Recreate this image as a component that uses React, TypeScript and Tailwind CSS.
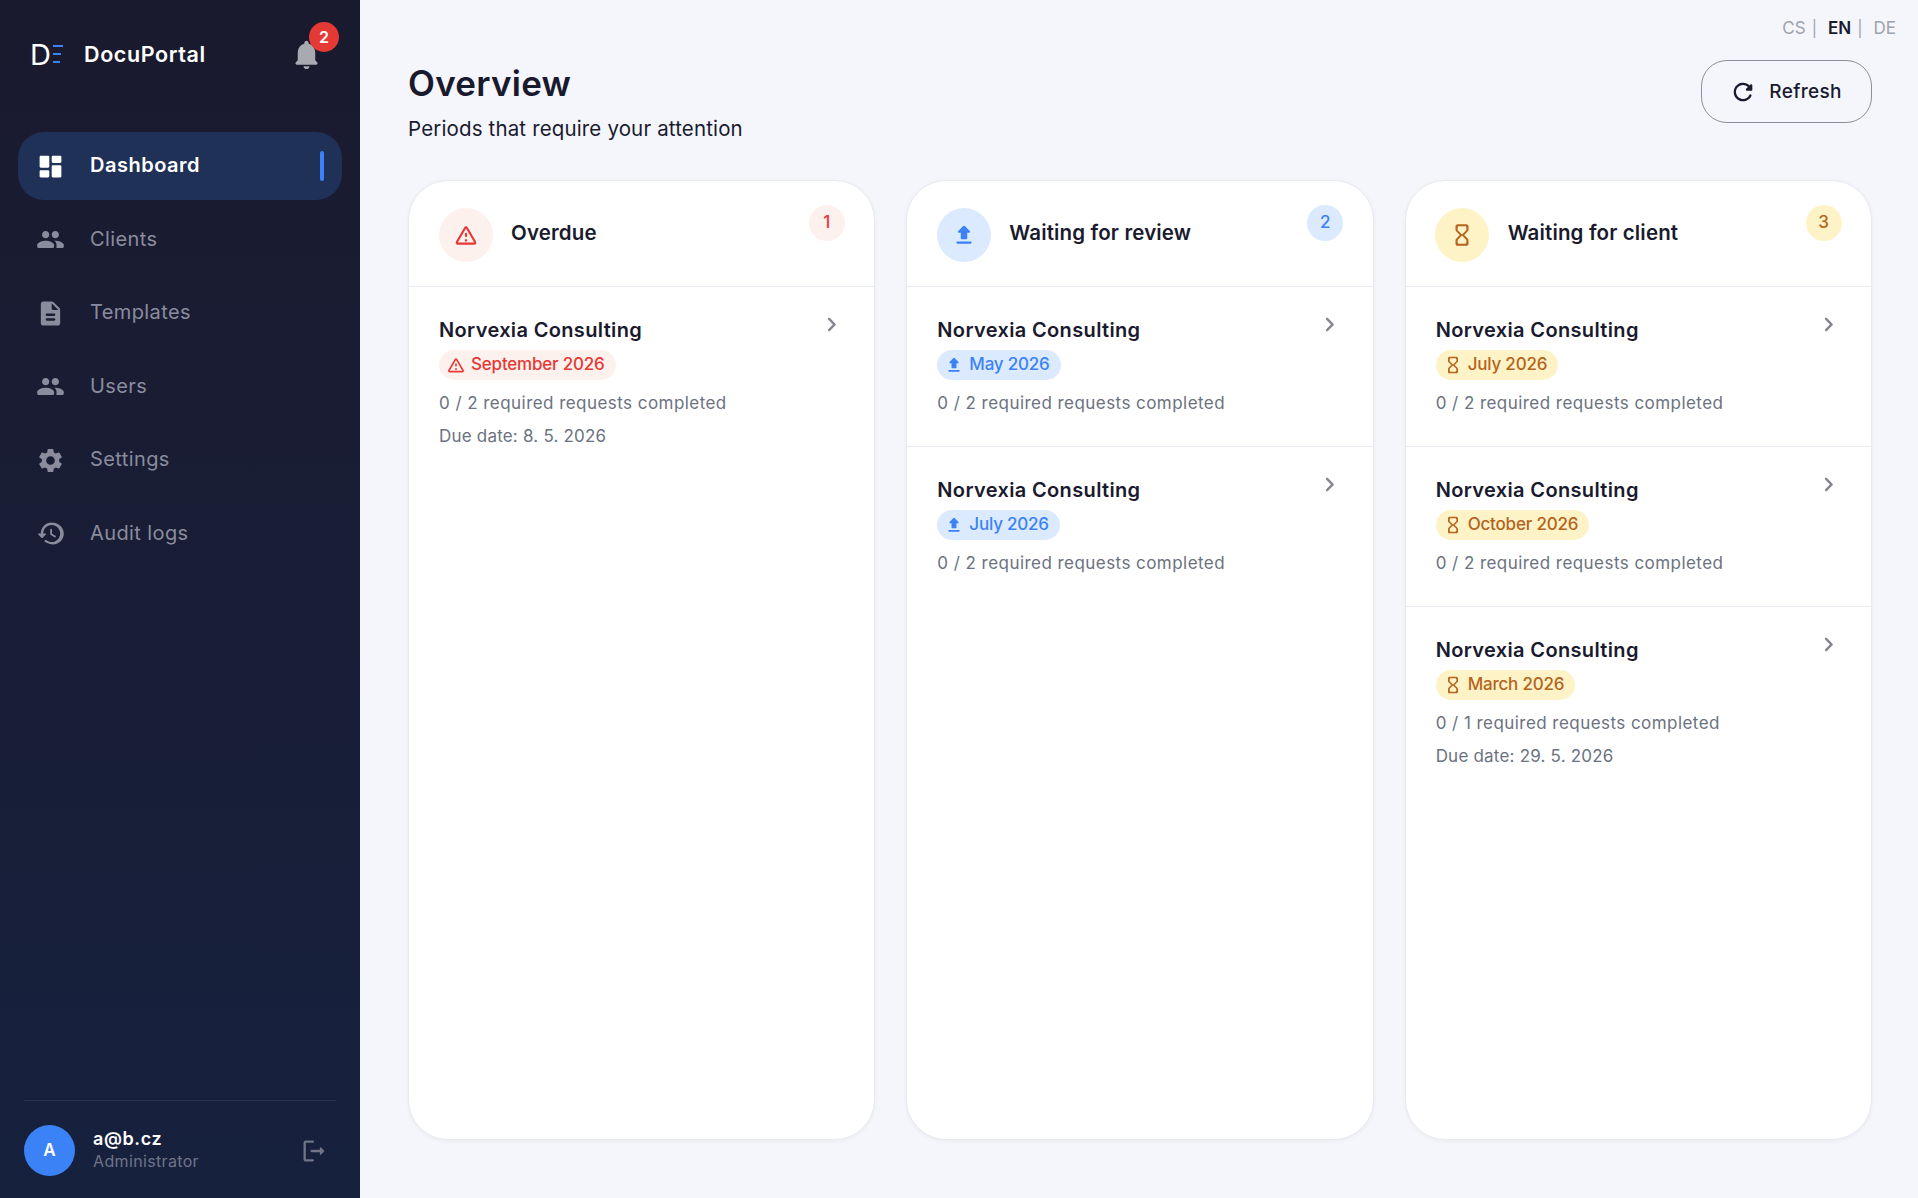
import type { ReactNode } from 'react';

const paths = {
  dashboard: 'M4 13h6c.55 0 1-.45 1-1V4c0-.55-.45-1-1-1H4c-.55 0-1 .45-1 1v8c0 .55.45 1 1 1zm0 8h6c.55 0 1-.45 1-1v-4c0-.55-.45-1-1-1H4c-.55 0-1 .45-1 1v4c0 .55.45 1 1 1zm10 0h6c.55 0 1-.45 1-1v-8c0-.55-.45-1-1-1h-6c-.55 0-1 .45-1 1v8c0 .55.45 1 1 1zM13 4v4c0 .55.45 1 1 1h6c.55 0 1-.45 1-1V4c0-.55-.45-1-1-1h-6c-.55 0-1 .45-1 1z',
  people: 'M16 11c1.66 0 2.99-1.34 2.99-3S17.66 5 16 5s-3 1.34-3 3 1.34 3 3 3zm-8 0c1.66 0 2.99-1.34 2.99-3S9.66 5 8 5 5 6.34 5 8s1.34 3 3 3zm0 2c-2.33 0-7 1.17-7 3.5V18c0 .55.45 1 1 1h12c.55 0 1-.45 1-1v-1.5c0-2.33-4.67-3.5-7-3.5zm8 0c-.29 0-.62.02-.97.05.02.01.03.03.04.04 1.14.83 1.93 1.94 1.93 3.41V18c0 .35-.07.69-.18 1H22c.55 0 1-.45 1-1v-1.5c0-2.33-4.67-3.5-7-3.5z',
  description: 'M14.59 2.59c-.38-.38-.89-.59-1.42-.59H6c-1.1 0-2 .9-2 2v16c0 1.1.89 2 1.99 2H18c1.1 0 2-.9 2-2V8.83c0-.53-.21-1.04-.59-1.41l-4.82-4.83zM15 18H9c-.55 0-1-.45-1-1s.45-1 1-1h6c.55 0 1 .45 1 1s-.45 1-1 1zm0-4H9c-.55 0-1-.45-1-1s.45-1 1-1h6c.55 0 1 .45 1 1s-.45 1-1 1zm-2-6V3.5L18.5 9H14c-.55 0-1-.45-1-1z',
  settings: 'M19.14 12.94c.04-.3.06-.61.06-.94 0-.32-.02-.64-.07-.94l2.03-1.58c.18-.14.23-.41.12-.61l-1.92-3.32c-.12-.22-.37-.29-.59-.22l-2.39.96c-.5-.38-1.03-.7-1.62-.94l-.36-2.54c-.04-.24-.24-.41-.48-.41h-3.84c-.24 0-.43.17-.47.41l-.36 2.54c-.59.24-1.13.57-1.62.94l-2.39-.96c-.22-.08-.47 0-.59.22L2.74 8.87c-.12.21-.08.47.12.61l2.03 1.58c-.05.3-.09.63-.09.94s.02.64.07.94l-2.03 1.58c-.18.14-.23.41-.12.61l1.92 3.32c.12.22.37.29.59.22l2.39-.96c.5.38 1.03.7 1.62.94l.36 2.54c.05.24.24.41.48.41h3.84c.24 0 .44-.17.47-.41l.36-2.54c.59-.24 1.13-.56 1.62-.94l2.39.96c.22.08.47 0 .59-.22l1.92-3.32c.12-.22.07-.47-.12-.61l-2.01-1.58zM12 15.6c-1.98 0-3.6-1.62-3.6-3.6s1.62-3.6 3.6-3.6 3.6 1.62 3.6 3.6-1.62 3.6-3.6 3.6z',
  history: 'M13.26 3C8.17 2.86 4 6.95 4 12H2.21c-.45 0-.67.54-.35.85l2.79 2.8c.2.2.51.2.71 0l2.79-2.8c.31-.31.09-.85-.36-.85H6c0-3.9 3.18-7.05 7.1-7 3.72.05 6.85 3.18 6.9 6.9.05 3.91-3.1 7.1-7 7.1-1.61 0-3.1-.55-4.28-1.48-.4-.31-.96-.28-1.32.08-.42.43-.39 1.13.08 1.5C9.99 20.28 11.91 21 14 21c5.05 0 9.14-4.17 9-9.26-.13-4.69-4.05-8.61-8.74-8.74zm-.76 5c-.41 0-.75.34-.75.75v3.68c0 .35.19.68.49.86l3.12 1.85c.36.21.82.09 1.03-.26.21-.36.09-.82-.26-1.03l-2.88-1.71v-3.4c0-.4-.34-.74-.75-.74z',
  bell: 'M12 22c1.1 0 2-.9 2-2h-4c0 1.1.9 2 2 2zm6-6v-5c0-3.07-1.63-5.64-4.5-6.32V4c0-.83-.67-1.5-1.5-1.5s-1.5.67-1.5 1.5v.68C7.64 5.36 6 7.92 6 11v5l-1.29 1.29c-.63.63-.19 1.71.7 1.71h13.17c.89 0 1.34-1.08.71-1.71L18 16z',
  logout: 'M5 5h6c.55 0 1-.45 1-1s-.45-1-1-1H5c-1.1 0-2 .9-2 2v14c0 1.1.9 2 2 2h6c.55 0 1-.45 1-1s-.45-1-1-1H5V5zM20.65 11.65l-2.79-2.79c-.32-.32-.86-.1-.86.35V11h-7c-.55 0-1 .45-1 1s.45 1 1 1h7v1.79c0 .45.54.67.85.35l2.79-2.79c.2-.19.2-.51.01-.7z',
  warning: 'M12 5.99 19.53 19H4.47L12 5.99M2.74 18c-.77 1.33.19 3 1.73 3h15.06c1.54 0 2.5-1.67 1.73-3L13.73 4.99c-.77-1.33-2.69-1.33-3.46 0L2.74 18zM11 11v2c0 .55.45 1 1 1s1-.45 1-1v-2c0-.55-.45-1-1-1s-1 .45-1 1zm0 5h2v2h-2z',
  upload: 'M10 16h4c.55 0 1-.45 1-1v-5h1.59c.89 0 1.34-1.08.71-1.71L12.71 3.7a.9959.9959 0 0 0-1.41 0L6.71 8.29c-.63.63-.19 1.71.7 1.71H9v5c0 .55.45 1 1 1zm-4 2h12c.55 0 1 .45 1 1s-.45 1-1 1H6c-.55 0-1-.45-1-1s.45-1 1-1z',
  hourglass: 'M8 2c-1.1 0-2 .9-2 2v3.17c0 .53.21 1.04.59 1.42L10 12l-3.42 3.42c-.37.38-.58.89-.58 1.42V20c0 1.1.9 2 2 2h8c1.1 0 2-.9 2-2v-3.16c0-.53-.21-1.04-.58-1.41L14 12l3.41-3.4c.38-.38.59-.89.59-1.42V4c0-1.1-.9-2-2-2H8zm8 14.5V19c0 .55-.45 1-1 1H9c-.55 0-1-.45-1-1v-2.5l4-4 4 4zm-4-5-4-4V5c0-.55.45-1 1-1h6c.55 0 1 .45 1 1v2.5l-4 4z',
  refresh: 'M17.65 6.35c-1.63-1.63-3.94-2.57-6.48-2.31-3.67.37-6.69 3.35-7.1 7.02C3.52 15.91 7.27 20 12 20c3.19 0 5.93-1.87 7.21-4.56.32-.67-.16-1.44-.9-1.44-.37 0-.72.2-.88.53-1.13 2.43-3.84 3.97-6.8 3.31-2.22-.49-4.01-2.3-4.48-4.52C5.31 9.44 8.26 6 12 6c1.66 0 3.14.69 4.22 1.78l-1.51 1.51c-.63.63-.19 1.71.7 1.71H19c.55 0 1-.45 1-1V6.41c0-.89-1.08-1.34-1.71-.71l-.64.65z',
  chevron: 'M9.29 6.71c-.39.39-.39 1.02 0 1.41L13.17 12l-3.88 3.88c-.39.39-.39 1.02 0 1.41.39.39 1.02.39 1.41 0l4.59-4.59c.39-.39.39-1.02 0-1.41L10.7 6.7c-.38-.38-1.02-.38-1.41.01z',
};

function Icon({ name, className }: { name: keyof typeof paths; className: string }) {
  return (
    <svg viewBox="0 0 24 24" fill="currentColor" className={className}>
      <path d={paths[name]} />
    </svg>
  );
}

const navItems: { label: string; icon: keyof typeof paths }[] = [
  { label: 'Clients', icon: 'people' },
  { label: 'Templates', icon: 'description' },
  { label: 'Users', icon: 'people' },
  { label: 'Settings', icon: 'settings' },
  { label: 'Audit logs', icon: 'history' },
];

const tones = {
  red: { icon: 'warning', soft: 'bg-[#fdf1ee]', text: 'text-[#e53935]' },
  blue: { icon: 'upload', soft: 'bg-[#dbeafe]', text: 'text-[#3b82f6]' },
  amber: { icon: 'hourglass', soft: 'bg-[#fef3c7]', text: 'text-[#b4641c]' },
} as const;

type Tone = keyof typeof tones;

type Period = { month: string; total: number; due?: string };

const columns: { title: string; tone: Tone; periods: Period[] }[] = [
  { title: 'Overdue', tone: 'red', periods: [{ month: 'September 2026', total: 2, due: '8. 5. 2026' }] },
  {
    title: 'Waiting for review',
    tone: 'blue',
    periods: [
      { month: 'May 2026', total: 2 },
      { month: 'July 2026', total: 2 },
    ],
  },
  {
    title: 'Waiting for client',
    tone: 'amber',
    periods: [
      { month: 'July 2026', total: 2 },
      { month: 'October 2026', total: 2 },
      { month: 'March 2026', total: 1, due: '29. 5. 2026' },
    ],
  },
];

function Sidebar() {
  return (
    <aside className="flex w-[360px] shrink-0 flex-col bg-gradient-to-b from-[#1a1a2e] to-[#16213e]">
      <div className="mt-[32px] flex h-[44px] items-center pl-[30px] pr-[36px]">
        <span className="w-[19px] text-[29px] leading-none text-white">D</span>
        <div className="ml-[4px] flex h-[18px] w-[10px] flex-col justify-between">
          <div className="h-[2px] w-[10px] bg-[#3b82f6]" />
          <div className="h-[2px] w-[8px] bg-[#3b82f6]" />
          <div className="h-[2px] w-[7px] bg-[#3b82f6]" />
        </div>
        <span className="ml-[21px] text-[21.5px] font-semibold tracking-[0.6px] text-white">DocuPortal</span>
        <div className="relative ml-auto">
          <Icon name="bell" className="h-[35px] w-[35px] text-[#a9a9b1]" />
          <span className="absolute -right-[15px] -top-[15px] flex h-[30px] w-[30px] items-center justify-center rounded-full bg-[#e53935] text-[16px] font-semibold text-white">
            2
          </span>
        </div>
      </div>

      <nav className="mt-[56px] flex flex-col gap-[5.5px] px-[18px]">
        <a className="flex h-[68px] items-center rounded-[26px] bg-[#203158] pl-[18px] pr-[18px] text-white">
          <Icon name="dashboard" className="h-[29px] w-[29px]" />
          <span className="mb-[2px] ml-[25px] text-[20px] font-semibold tracking-[0.5px]">Dashboard</span>
          <span className="ml-auto h-[30px] w-[4px] rounded-full bg-[#3b82f6]" />
        </a>
        {navItems.map((item) => (
          <a key={item.label} className="flex h-[68px] items-center pl-[18px] text-[#8a8c9e]">
            <Icon name={item.icon} className="h-[29px] w-[29px]" />
            <span className="mb-[2px] ml-[25px] text-[20px] tracking-[0.4px]">{item.label}</span>
          </a>
        ))}
      </nav>

      <div className="mx-[24px] mt-auto flex items-center border-t border-[#2e3350] pb-[22px] pt-[24px]">
        <div className="flex h-[51px] w-[51px] items-center justify-center rounded-full bg-[#3b82f6] text-[17px] font-semibold text-white">
          A
        </div>
        <div className="ml-[18px] flex flex-col pb-[3px]">
          <span className="text-[18px] font-semibold leading-[23px] tracking-[0.6px] text-white">a@b.cz</span>
          <span className="text-[16px] leading-[22px] tracking-[0.35px] text-[#6f7488]">Administrator</span>
        </div>
        <Icon name="logout" className="ml-auto mr-[8px] h-[28px] w-[28px] text-[#6f7488]" />
      </div>
    </aside>
  );
}

function PeriodRow({ client, period, tone, last }: { client: string; period: Period; tone: Tone; last: boolean }) {
  const t = tones[tone];
  return (
    <div className={`flex flex-col px-[30px] pb-[31px] pt-[29px] ${last ? '' : 'border-b border-[#e8eaf0]'}`}>
      <div className="flex h-[28px] items-center justify-between">
        <span className="mb-px text-[20px] font-semibold tracking-[0.35px] text-[#1a1a2e]">{client}</span>
        <Icon name="chevron" className="-mr-[1.5px] -mt-[12px] h-[29px] w-[29px] text-[#85858f]" />
      </div>
      <div className={`mt-[6px] flex h-[30px] w-fit items-center rounded-full pl-[7px] pr-[11px] ${t.soft} ${t.text}`}>
        <Icon name={t.icon} className="h-[20px] w-[20px]" />
        <span className="ml-[5px] text-[17px] font-medium tracking-[-0.2px]">{period.month}</span>
      </div>
      <p className="mt-[11px] text-[17px] leading-[24px] tracking-[0.45px] text-[#6b7280]">
        0 / {period.total} required requests completed
      </p>
      {period.due && (
        <p className="mt-[9px] text-[17px] leading-[24px] tracking-[0.2px] text-[#6b7280]">Due date: {period.due}</p>
      )}
    </div>
  );
}

function Column({ title, tone, children, count }: { title: string; tone: Tone; children: ReactNode; count: number }) {
  const t = tones[tone];
  return (
    <section className="flex flex-col overflow-hidden rounded-[40px] border border-[#e8eaf0] bg-white shadow-[0_1px_4px_rgba(26,26,46,0.05)]">
      <header className="flex h-[106px] shrink-0 border-b border-[#e8eaf0] pl-[29.5px] pr-[29.5px]">
        <div className={`mt-[27px] flex h-[54px] w-[54px] items-center justify-center rounded-full ${t.soft} ${t.text}`}>
          <Icon name={t.icon} className="h-[26px] w-[26px]" />
        </div>
        <h2 className="ml-[18.5px] mt-[38px] h-[28px] text-[20.5px] font-semibold leading-[28px] tracking-[0.15px] text-[#1a1a2e]">
          {title}
        </h2>
        <span className={`ml-auto mt-[24px] flex h-[36px] w-[36px] items-center justify-center rounded-full text-[17px] font-medium ${t.soft} ${t.text}`}>
          {count}
        </span>
      </header>
      {children}
    </section>
  );
}

export default function App() {
  return (
    <div className="flex h-[1198px] bg-[#f4f6fb] font-['Inter',sans-serif]">
      <Sidebar />
      <main className="flex min-w-0 flex-1 flex-col pb-[58px] pl-[48px] pr-[46px]">
        <div className="mt-[16px] flex h-[24px] items-center justify-end text-[17px] leading-[24px] text-[#a0a2ad]">
          <span>CS</span>
          <span className="ml-[6px] text-[16px]">|</span>
          <span className="ml-[11px] font-semibold text-[#1a1a2e]">EN</span>
          <span className="ml-[6px] text-[16px]">|</span>
          <span className="ml-[11px] mr-[-24px]">DE</span>
        </div>

        <div className="mt-[20px] flex h-[83px] justify-between">
          <div className="flex flex-col">
            <h1 className="mt-px h-[44px] text-[35px] font-semibold leading-[44px] tracking-[0.25px] text-[#1a1a2e]">Overview</h1>
            <p className="mt-[10px] text-[20.5px] leading-[28px] tracking-[0.15px] text-[#1a1a2e]">Periods that require your attention</p>
          </div>
          <button className="flex h-[63px] w-[171px] items-center justify-center gap-[12px] rounded-[26px] border border-[#8e8e98] pr-[2px] pt-px text-[19px] font-medium tracking-[0.3px] text-[#1a1a2e]">
            <Icon name="refresh" className="h-[28px] w-[28px]" />
            Refresh
          </button>
        </div>

        <div className="mt-[37px] grid min-h-0 flex-1 grid-cols-3 gap-[31px]">
          {columns.map((col) => (
            <Column key={col.title} title={col.title} tone={col.tone} count={col.periods.length}>
              {col.periods.map((p, i) => (
                <PeriodRow key={p.month} client="Norvexia Consulting" period={p} tone={col.tone} last={i === col.periods.length - 1} />
              ))}
            </Column>
          ))}
        </div>
      </main>
    </div>
  );
}
